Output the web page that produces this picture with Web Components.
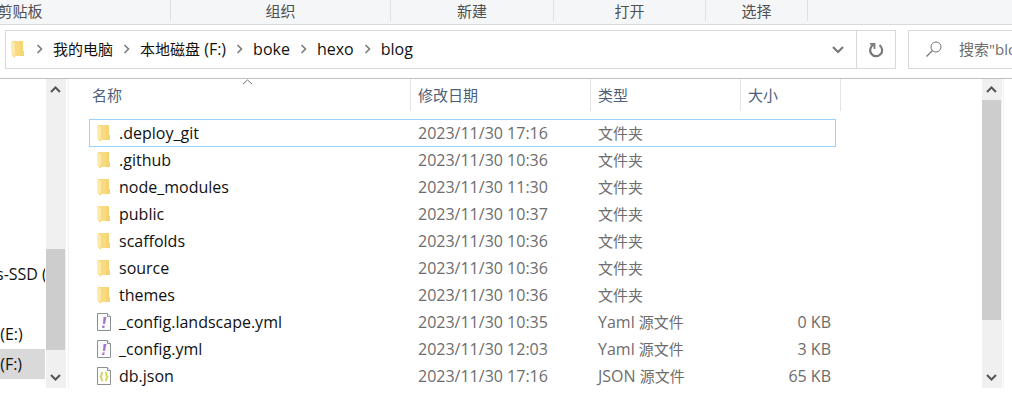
<!DOCTYPE html>
<html lang="zh-CN">
<head>
<meta charset="utf-8">
<title>blog</title>
<style>
body { margin: 0; background: #fff; font-family: "Open Sans", "Noto Sans CJK SC", sans-serif; font-size: 16px; color: #111; }
</style>
</head>
<body>
<explorer-window></explorer-window>
<script>
const base = `
  *, *::before, *::after { box-sizing: border-box; }
  button, input { font: inherit; color: inherit; background: none; border: 0; padding: 0; margin: 0; }
  button { cursor: pointer; }
  svg { display: block; flex: none; }
  .zh { font-size: 15px; }`;

function define(name, html, setup) {
  const template = document.createElement('template');
  template.innerHTML = html;
  customElements.define(name, class extends HTMLElement {
    constructor() {
      super();
      this.attachShadow({ mode: 'open' }).append(template.content.cloneNode(true));
    }
    connectedCallback() { if (setup) setup(this, this.shadowRoot); }
  });
}

// Chinese runs are set one pixel smaller than Latin ones.
const mixed = text => text.replace(/[\u4e00-\u9fff]+/g, run => `<span class="zh">${run}</span>`);

const icons = {
  folder: `<svg width="14" height="18" viewBox="0 0 14 18"><path d="M1 1h11v10h1v5H4z" fill="#f8da80"/><path d="M9 1h3v10h1v5H9z" fill="#f4d06c" opacity=".6"/><path d="M0 1.500L4 3v14.500L.500 15z" fill="#ffe9a9"/><path d="M1 15l3 2.500V16z" fill="#f0c95c"/></svg>`,
  yaml: `<svg width="14" height="18" viewBox="0 0 14 18"><path d="M.5.500h10l3 3v14H.5z" fill="#fafbfb" stroke="#8b9191"/><path d="M10.500.500v3h3" fill="#fff" stroke="#8b9191"/><path d="M6.500 4h3L8 11H6z" fill="#a678cc"/><path d="M5.500 12.500h2.200l-.4 2.500H5z" fill="#a678cc"/></svg>`,
  json: `<svg width="14" height="18" viewBox="0 0 14 18"><path d="M.5.500h10l3 3v14H.5z" fill="#fafbfb" stroke="#8b9191"/><path d="M10.500.500v3h3" fill="#fff" stroke="#8b9191"/><path d="M6 5.500Q4.500 5.500 4.500 6.500V8.500L3.500 9.500L4.500 10.500V12.500Q4.500 13.500 6 13.500M8 5.500Q9.500 5.500 9.500 6.500V8.500L10.500 9.500L9.500 10.500V12.500Q9.500 13.500 8 13.500" fill="none" stroke="#d2d045" stroke-width="1.600"/></svg>`,
};

define('file-icon', `<style>${base} :host { display: block; flex: none; width: 14px; height: 18px; }</style>`,
  (host, root) => root.append(document.createRange().createContextualFragment(icons[host.getAttribute('kind')])));

define('ribbon-group', `<style>${base}
  :host { display: flex; justify-content: center; flex: none; height: 21px; border-right: 1px solid #dfe1e3; box-sizing: border-box; font-size: 15px; line-height: 22px; color: #505050; }
</style><slot></slot>`);

define('ribbon-bar', `<style>${base}
  :host { display: flex; height: 25px; overflow: hidden; background: #f4f6f8; border-bottom: 1px solid #d8dadc; box-sizing: border-box; flex: none; }
  .strip { display: flex; margin-left: -130px; }
  .w1 { width: 301px; } .w2 { width: 220px; } .w3 { width: 163px; } .w4 { width: 152px; } .w5 { width: 102px; }
</style>
<div class="strip">
  <ribbon-group class="w1">剪贴板</ribbon-group>
  <ribbon-group class="w2">组织</ribbon-group>
  <ribbon-group class="w3">新建</ribbon-group>
  <ribbon-group class="w4">打开</ribbon-group>
  <ribbon-group class="w5">选择</ribbon-group>
</div>`);

define('path-crumb', `<style>${base}
  :host { display: flex; align-items: center; gap: 10px; }
  button { line-height: 24px; white-space: nowrap; }
</style>
<svg width="7" height="10" viewBox="0 0 7 10"><path d="M1.500 1l4 4-4 4" fill="none" stroke="#7c7c7c" stroke-width="1.600"/></svg>
<button type="button"></button>`,
  (host, root) => { root.querySelector('button').innerHTML = mixed(host.getAttribute('label')); });

define('address-bar', `<style>${base}
  :host { display: flex; flex: none; gap: 12px; height: 54px; padding: 5px 0 9px 5px; border-bottom: 1px solid #bfbfbf; box-sizing: border-box; overflow: hidden; }
  .path { display: flex; flex: 1; align-items: stretch; border: 1px solid #d9d9d9; min-width: 0; }
  nav { display: flex; flex: 1; align-items: center; gap: 10px; padding: 0 0 2px 5px; min-width: 0; }
  file-icon { margin-right: 1px; }
  .drop, .refresh { display: flex; align-items: center; justify-content: center; width: 36px; }
  .refresh { width: 39px; border-left: 1px solid #d9d9d9; }
  .search { display: flex; align-items: center; gap: 17px; width: 104px; padding: 0 0 1px 17px; border: 1px solid #d9d9d9; border-right: 0; overflow: hidden; }
  input { flex: none; width: 160px; outline: 0; font-size: 15px; line-height: 24px; }
  input::placeholder { color: #6d6d6d; opacity: 1; }
</style>
<div class="path">
  <nav aria-label="路径">
    <file-icon kind="folder"></file-icon>
    <path-crumb label="我的电脑"></path-crumb>
    <path-crumb label="本地磁盘 (F:)"></path-crumb>
    <path-crumb label="boke"></path-crumb>
    <path-crumb label="hexo"></path-crumb>
    <path-crumb label="blog"></path-crumb>
  </nav>
  <button class="drop" type="button" aria-label="历史记录"><svg width="12" height="8" viewBox="0 0 12 8"><path d="M1 1l5 5 5-5" fill="none" stroke="#757575" stroke-width="2"/></svg></button>
  <button class="refresh" type="button" aria-label="刷新"><svg width="16" height="16" viewBox="0 0 16 16"><path d="M5.500 2.800A6 6 0 1 0 11.500 3.200" fill="none" stroke="#7a7a7a" stroke-width="2.200"/><path d="M2 1.800H6.500V7" fill="none" stroke="#7a7a7a" stroke-width="1.800"/></svg></button>
</div>
<label class="search"><svg width="16" height="16" viewBox="0 0 16 16"><circle cx="10" cy="6" r="5" fill="none" stroke="#777"/><path d="M6.500 9.500L.500 15.500" stroke="#777" stroke-width="1.200"/></svg><input type="search" aria-label="搜索" placeholder='搜索"blog"'></label>`);

define('scroll-bar', `<style>${base}
  :host { display: flex; flex-direction: column; flex: none; width: 20px; background: #f0f0f0; }
  button { display: flex; align-items: center; justify-content: center; flex: none; width: 19px; height: 21px; }
  .down svg { transform: rotate(180deg); }
  .thumb { width: 19px; background: #cdcdcd; }
</style>
<button type="button" aria-label="向上滚动"><svg width="11" height="7" viewBox="0 0 11 7"><path d="M1 6l4.500-4.500L10 6" fill="none" stroke="#555" stroke-width="2"/></svg></button>
<div class="before"></div><div class="thumb"></div><div class="after"></div>
<button class="down" type="button" aria-label="向下滚动"><svg width="11" height="7" viewBox="0 0 11 7"><path d="M1 6l4.500-4.500L10 6" fill="none" stroke="#555" stroke-width="2"/></svg></button>`,
  (host, root) => {
    const parts = host.getAttribute('split').split(' ');
    ['before', 'thumb', 'after'].forEach((name, i) => { root.querySelector('.' + name).style.flexGrow = parts[i]; });
  });

define('nav-pane', `<style>${base}
  :host { display: flex; flex: none; width: 69px; padding-right: 2px; border-right: 1px solid #f3f3f3; box-sizing: border-box; }
  .tree { display: flex; flex-direction: column; justify-content: flex-end; flex: 1; overflow: hidden; padding: 0 1px 9px 0; }
  a { display: block; flex: none; height: 30px; line-height: 30px; white-space: pre; color: inherit; text-decoration: none; overflow: hidden; }
  a span { margin-left: -4px; }
  a.on { background: #d9d9d9; }
</style>
<nav class="tree" aria-label="导航窗格"><a href="#c"><span>s-SSD (C:)</span></a><a href="#d" aria-label="D"></a><a href="#e"><span> (E:)</span></a><a class="on" href="#f"><span> (F:)</span></a></nav>
<scroll-bar split="149 101 17"></scroll-bar>`);

const files = [
  ['folder', '.deploy_git', '2023/11/30 17:16', '文件夹', ''],
  ['folder', '.github', '2023/11/30 10:36', '文件夹', ''],
  ['folder', 'node_modules', '2023/11/30 11:30', '文件夹', ''],
  ['folder', 'public', '2023/11/30 10:37', '文件夹', ''],
  ['folder', 'scaffolds', '2023/11/30 10:36', '文件夹', ''],
  ['folder', 'source', '2023/11/30 10:36', '文件夹', ''],
  ['folder', 'themes', '2023/11/30 10:36', '文件夹', ''],
  ['yaml', '_config.landscape.yml', '2023/11/30 10:35', 'Yaml 源文件', '0 KB'],
  ['yaml', '_config.yml', '2023/11/30 12:03', 'Yaml 源文件', '3 KB'],
  ['json', 'db.json', '2023/11/30 17:16', 'JSON 源文件', '65 KB'],
];

define('file-list', `<style>${base}
  :host { display: block; flex: 1; min-width: 0; overflow: hidden; padding-left: 20px; }
  table { table-layout: fixed; width: 752px; border-collapse: separate; border-spacing: 0; }
  .name { width: 322px; } .date { width: 180px; } .type { width: 150px; } .size { width: 95px; } .rest { width: 5px; }
  th { height: 40px; padding: 0; vertical-align: top; font-weight: normal; position: relative; }
  th button { display: block; width: 100%; height: 32px; padding: 0 7px; border-right: 1px solid #e3e3e3; text-align: left; font-size: 15px; line-height: 32px; color: #4c607a; }
  th:first-child button { padding-left: 3px; }
  th svg { position: absolute; top: 0; left: 50%; margin-left: -8px; }
  td { height: 27px; padding: 0 7px; border: 0 solid transparent; border-bottom-width: 2px; line-height: 24px; white-space: nowrap; color: #6d6d6d; }
  td:first-child { border-left-width: 1px; color: #111; }
  td:last-child { border-right-width: 1px; padding-right: 4px; text-align: right; }
  tr.focus td { height: 28px; border-top-width: 1px; border-bottom-width: 1px; border-color: #99d1ff; }
  .file { display: flex; align-items: center; gap: 8px; height: 24px; }
</style>
<table>
  <colgroup><col class="name"><col class="date"><col class="type"><col class="size"><col class="rest"></colgroup>
  <thead><tr>
    <th aria-sort="ascending"><button type="button">名称</button><svg width="11" height="6" viewBox="0 0 11 6"><path d="M1 5l4.500-4L10 5" fill="none" stroke="#777"/></svg></th>
    <th><button type="button">修改日期</button></th>
    <th><button type="button">类型</button></th>
    <th colspan="2"><button type="button">大小</button></th>
  </tr></thead>
  <tbody></tbody>
</table>`,
  (host, root) => {
    root.querySelector('tbody').innerHTML = files.map(([kind, name, date, type, size], i) =>
      `<tr${i ? '' : ' class="focus"'}><td><div class="file"><file-icon kind="${kind}"></file-icon>${name}</div></td><td>${date}</td><td>${mixed(type)}</td><td>${size}</td></tr>`).join('');
  });

define('explorer-window', `<style>${base}
  :host { display: flex; flex-direction: column; height: 100vh; padding-bottom: 26px; box-sizing: border-box; overflow: hidden; }
  main { display: flex; flex: 1; min-height: 0; padding-right: 8px; }
  .files { display: flex; flex: 1; min-width: 0; padding-right: 1px; border-right: 1px solid #f3f3f3; }
</style>
<ribbon-bar></ribbon-bar>
<address-bar></address-bar>
<main>
  <nav-pane></nav-pane>
  <div class="files"><file-list></file-list><scroll-bar split="0 220 47"></scroll-bar></div>
</main>`);
</script>
</body>
</html>
